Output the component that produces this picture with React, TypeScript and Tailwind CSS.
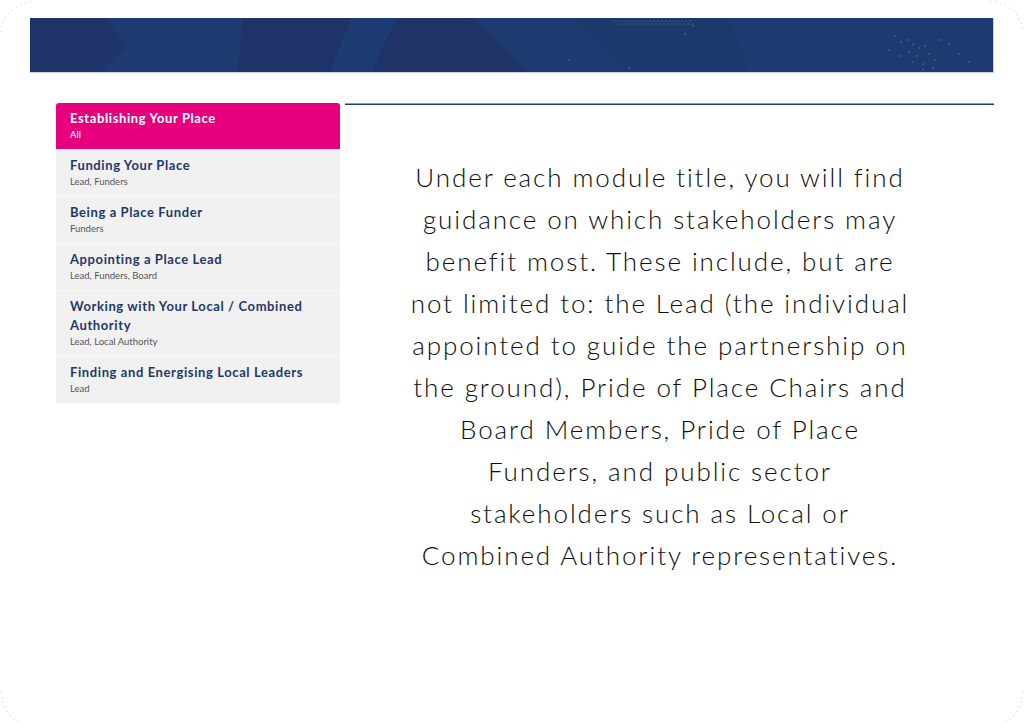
import React from 'react';

type Module = { title: string; who: string; active?: boolean };

const modules: Module[] = [
  { title: 'Establishing Your Place', who: 'All', active: true },
  { title: 'Funding Your Place', who: 'Lead, Funders' },
  { title: 'Being a Place Funder', who: 'Funders' },
  { title: 'Appointing a Place Lead', who: 'Lead, Funders, Board' },
  { title: 'Working with Your Local / Combined Authority', who: 'Lead, Local Authority' },
  { title: 'Finding and Energising Local Leaders', who: 'Lead' },
];

const Banner: React.FC = () => (
  <div className="h-[55px] w-full overflow-hidden border-b border-r border-[#c9cfdb] bg-[#1d3a71]">
    <svg width="100%" height="100%" viewBox="0 0 964 54" preserveAspectRatio="none">
      <rect width="964" height="54" fill="#1d3a71" />
      <polygon points="0,0 75,0 97,28 70,54 0,54" fill="#1e3468" />
      <polygon points="213,0 322,0 300,54 208,54" fill="#1e3468" />
      <polygon points="322,0 367,0 342,54 300,54" fill="#1e3c74" />
      <polygon points="367,0 443,0 497,54 342,54" fill="#1f3366" />
      <polygon points="540,0 700,0 720,54 600,54" fill="#1c386d" opacity="0.6" />
      {Array.from({ length: 40 }).map((_, i) => (
        <circle key={i} cx={585 + (i % 20) * 4 + (i >= 20 ? 2 : 0)} cy={i >= 20 ? 6 : 3} r="0.6" fill="#6d7fa8" />
      ))}
      {[
        [866, 18], [872, 24], [878, 22], [884, 26], [890, 30], [896, 28], [880, 34], [888, 38], [900, 36], [884, 44],
        [894, 46], [906, 42], [860, 32], [870, 38], [912, 22], [920, 26], [930, 36], [904, 50], [894, 52], [940, 44],
        [664, 8], [656, 16], [540, 42], [600, 50],
      ].map(([x, y], i) => (
        <circle key={`d${i}`} cx={x} cy={y} r="0.7" fill="#6d7fa8" />
      ))}
    </svg>
  </div>
);

const CornerDots: React.FC<{ className: string; d: string }> = ({ className, d }) => (
  <svg className={`pointer-events-none absolute ${className}`} width="40" height="40" viewBox="0 0 40 40">
    <path d={d} fill="none" stroke="#d4d6da" strokeWidth="1.2" strokeDasharray="1 4" />
  </svg>
);

export default function App() {
  return (
    <div className="relative h-[724px] w-[1024px] overflow-hidden bg-white px-[30px] pt-[18px]" style={{ fontFamily: 'Lato, "Open Sans", sans-serif' }}>
      <CornerDots className="left-0 top-0" d="M1,32 Q4,6 34,1" />
      <CornerDots className="right-0 top-0" d="M6,1 Q36,6 39,32" />
      <CornerDots className="bottom-0 left-0" d="M1,8 Q4,34 22,39" />
      <CornerDots className="bottom-0 right-0" d="M39,8 Q36,34 18,39" />

      <Banner />

      <div className="mt-[30px] flex items-start gap-[5px] pl-[26px]">
        <nav className="flex w-[284px] flex-col">
          {modules.map((m) => (
            <div
              key={m.title}
              className={`border-b border-[#fafafa] px-[14px] pb-[8px] pt-[6px] ${
                m.active ? 'rounded-t-[3px] bg-[#e6007e] text-white' : 'bg-[#f1f1f1] text-[#1f3868]'
              }`}
            >
              <div className="text-[13px] font-bold leading-[19px] tracking-[0.6px]">{m.title}</div>
              <div className={`mt-px text-[9.5px] leading-[12px] ${m.active ? 'text-white' : 'text-[#555]'}`}>{m.who}</div>
            </div>
          ))}
        </nav>

        <div className="flex-1">
          <div className="h-[2px] w-full border-t border-[#8f9bb8] bg-[#1f3a6e]" />
          <p className="ml-[62px] mt-[51px] w-[506px] text-center text-[26px] font-light leading-[42px] tracking-[1.9px] text-[#0d0d0d]">
            Under each module title, you will find guidance on which stakeholders may benefit most. These include, but are not limited to: the Lead (the individual appointed to guide the partnership on the ground), Pride of Place Chairs and Board Members, Pride of Place Funders, and public sector stakeholders such as Local or Combined Authority representatives.
          </p>
        </div>
      </div>
    </div>
  );
}
